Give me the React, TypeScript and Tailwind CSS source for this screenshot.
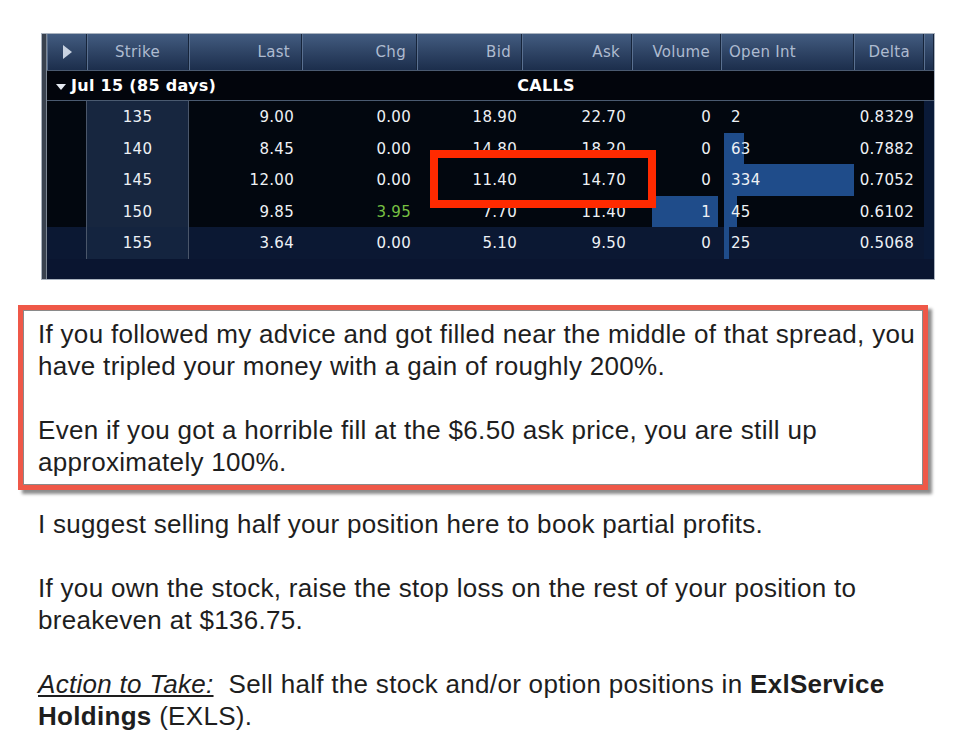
import React from "react";

type Row = {
  strike: string;
  last: string;
  chg: string;
  bid: string;
  ask: string;
  vol: string;
  oi: string;
  oiBar: number;
  delta: string;
  up?: boolean;
  volBar?: boolean;
  selected?: boolean;
};

const rows: Row[] = [
  { strike: "135", last: "9.00", chg: "0.00", bid: "18.90", ask: "22.70", vol: "0", oi: "2", oiBar: 0, delta: "0.8329" },
  { strike: "140", last: "8.45", chg: "0.00", bid: "14.80", ask: "18.20", vol: "0", oi: "63", oiBar: 20, delta: "0.7882" },
  { strike: "145", last: "12.00", chg: "0.00", bid: "11.40", ask: "14.70", vol: "0", oi: "334", oiBar: 130, delta: "0.7052" },
  { strike: "150", last: "9.85", chg: "3.95", bid: "7.70", ask: "11.40", vol: "1", oi: "45", oiBar: 13, delta: "0.6102", up: true, volBar: true },
  { strike: "155", last: "3.64", chg: "0.00", bid: "5.10", ask: "9.50", vol: "0", oi: "25", oiBar: 5, delta: "0.5068", selected: true },
];

const cols = "grid grid-cols-[40px_102px_113px_115px_105px_110px_89px_133px_70px_10px]";
const head = "flex h-full items-center border-r border-r-[#16243a] shadow-[inset_1px_0_0_#5a7090]";

function OptionChain() {
  return (
    <div className="relative flex h-[247px] w-[894px] border border-[#aab3bf] bg-[#0a1530] font-['DejaVu_Sans',sans-serif] text-[15px]">
      <div className="w-[6px] border-r border-[#7d8794] bg-[#39424f]" />
      <div className="flex flex-1 flex-col">
        <div className={`${cols} h-[36px] bg-gradient-to-b from-[#435c80] to-[#1c2e4c] text-[#aebbd0]`}>
          <div className={`${head} justify-center`}>
            <svg width="10" height="14" viewBox="0 0 10 14">
              <path d="M1 0 L10 7 L1 14 Z" fill="#c8d2e0" />
            </svg>
          </div>
          <div className={`${head} justify-center`}>Strike</div>
          <div className={`${head} justify-end pr-[11px]`}>Last</div>
          <div className={`${head} justify-end pr-[10px]`}>Chg</div>
          <div className={`${head} justify-end pr-[10px]`}>Bid</div>
          <div className={`${head} justify-end pr-[11px]`}>Ask</div>
          <div className={`${head} justify-end pr-[10px]`}>Volume</div>
          <div className={`${head} pl-[8px]`}>Open Int</div>
          <div className={`${head} justify-end pr-[13px]`}>Delta</div>
          <div className={head} />
        </div>
        <div className="flex h-[31px] items-center border-y border-[#4a5a70] bg-[#02050c] text-[16px] font-bold text-white">
          <svg width="10" height="6" viewBox="0 0 10 6" className="ml-[9px] mr-[5px] mt-[2px]">
            <path d="M0 0 L10 0 L5 6 Z" fill="#e6ebf2" />
          </svg>
          <span>Jul 15 (85 days)</span>
          <span className="ml-[301px]">CALLS</span>
        </div>
        {rows.map((r) => {
          const cell = r.selected ? "bg-[#0b1833]" : "bg-[#02070f]";
          return (
            <div key={r.strike} className={`${cols} h-[31.5px] border-b border-[#3f4b5e] text-[#eef1f5]`}>
              <div className={`${cell} border-r border-[#4a566a]`} />
              <div className={`flex items-center justify-center border-r border-[#4a566a] ${r.selected ? "bg-[#14243f]" : "bg-[#17263f]"}`}>{r.strike}</div>
              <div className={`${cell} flex items-center justify-end pr-[8px]`}>{r.last}</div>
              <div className={`${cell} flex items-center justify-end pr-[6px] ${r.up ? "text-[#77c043]" : ""}`}>{r.chg}</div>
              <div className={`${cell} flex items-center justify-end pr-[5px]`}>{r.bid}</div>
              <div className={`${cell} flex items-center justify-end pr-[6px]`}>{r.ask}</div>
              <div className={`${cell} relative flex items-center justify-end pr-[10px]`}>
                {r.volBar && <div className="absolute inset-y-0 left-[20px] right-[3px] bg-[#1f4c8a]" />}
                <span className="relative">{r.vol}</span>
              </div>
              <div className={`${cell} relative flex items-center pl-[10px]`}>
                <div className="absolute inset-y-0 left-[3px] bg-[#1f4c8a]" style={{ width: r.oiBar }} />
                <span className="relative">{r.oi}</span>
              </div>
              <div className={`${cell} flex items-center justify-end pr-[10px]`}>{r.delta}</div>
              <div className="bg-[#0a1a38]" />
            </div>
          );
        })}
        <div className="flex-1 bg-[#0a1530]" />
      </div>
      <div className="absolute left-[388px] top-[116px] h-[58px] w-[226px] border-[8px] border-[#ff2a00]" />
    </div>
  );
}

export default function App() {
  return (
    <div className="h-[753px] w-[975px] bg-white pl-[41px] pt-[33px] font-['Liberation_Sans',Arial,sans-serif] text-[26px] leading-[32px] tracking-[0.3px] text-[#1e1e1e]">
      <OptionChain />
      <div className="-ml-[23px] mt-[25px] w-[910px] border-[5px] border-[#ef5848] shadow-[4px_4px_3px_rgba(0,0,0,0.45)]">
        <div className="border border-[#8a8a8a] px-[14px] pb-[6px] pt-[7px]">
          <p className="whitespace-nowrap">
            If you followed my advice and got filled near the middle of that spread, you
            <br />
            have tripled your money with a gain of roughly 200%.
          </p>
          <p className="mt-[32px] whitespace-nowrap">
            Even if you got a horrible fill at the $6.50 ask price, you are still up
            <br />
            approximately 100%.
          </p>
        </div>
      </div>
      <div className="-ml-[3px] mt-[18px] whitespace-nowrap">
        <p>I suggest selling half your position here to book partial profits.</p>
        <p className="mt-[32px]">
          If you own the stock, raise the stop loss on the rest of your position to
          <br />
          breakeven at $136.75.
        </p>
        <p className="mt-[32px]">
          <span className="italic underline">Action to Take:</span>&nbsp; Sell half the stock and/or option positions in <b>ExlService</b>
          <br />
          <b>Holdings</b> (EXLS).
        </p>
      </div>
    </div>
  );
}
